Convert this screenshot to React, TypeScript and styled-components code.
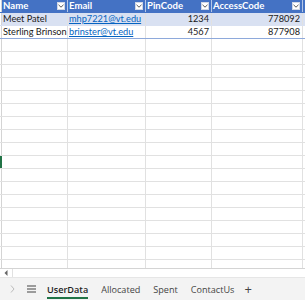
import React from "react";
import styled, { createGlobalStyle } from "styled-components";

const Global = createGlobalStyle`
  html, body { margin: 0; padding: 0; background: #fff; }
  body { width: 305px; height: 300px; overflow: hidden; }
  * { box-sizing: border-box; }
`;

const Sheet = styled.div`
  width: 305px;
  height: 300px;
  display: flex;
  flex-direction: column;
  font-family: Lato, "Liberation Sans", sans-serif;
`;

const GridArea = styled.div`
  height: 268px;
  overflow: hidden;
  display: flex;
  flex-direction: column;
`;

const Row = styled.div<{ $bg?: string; $bottom?: string }>`
  display: flex;
  height: 13px;
  flex: none;
  background: ${(p) => p.$bg || "#fff"};
  border-bottom: 1px solid ${(p) => p.$bottom || "#e1e1e1"};
`;

const RowHead = styled.div<{ $sel?: boolean }>`
  width: 2px;
  flex: none;
  background: ${(p) => (p.$sel ? "#217346" : "#fff")};
  border-right: 1px solid ${(p) => (p.$sel ? "#217346" : "#d4d4d4")};
`;

const Cell = styled.div<{ $w: number; $align?: string; $head?: boolean }>`
  width: ${(p) => p.$w}px;
  flex: none;
  height: 100%;
  display: flex;
  align-items: center;
  justify-content: ${(p) => (p.$align === "right" ? "flex-end" : "flex-start")};
  padding: 0 2px 0 1px;
  border-right: 1px solid ${(p) => (p.$head ? "#b4c6e7" : "#e1e1e1")};
  font-size: ${(p) => (p.$head ? "9.6px" : "9.2px")};
  line-height: 12px;
  white-space: nowrap;
  overflow: hidden;
  color: ${(p) => (p.$head ? "#fff" : "#1a1a1a")};
  font-weight: ${(p) => (p.$head ? 700 : 400)};
`;

const HeadLabel = styled.span`
  flex: 1;
`;

const Drop = styled.span`
  width: 8px;
  height: 8px;
  flex: none;
  background: #fff;
  border: 1px solid #d0d7e5;
  display: flex;
  align-items: center;
  justify-content: center;
`;

const Link = styled.span`
  color: #0563c1;
  text-decoration: underline;
`;

const Scroll = styled.div`
  height: 10px;
  flex: none;
  border-top: 1px solid #d4d4d4;
  border-bottom: 1px solid #e6e6e6;
  background: #fff;
  display: flex;
`;

const ScrollBtn = styled.div`
  width: 13px;
  border-right: 1px solid #e1e1e1;
  display: flex;
  align-items: center;
  justify-content: center;
`;

const TabBar = styled.div`
  flex: 1;
  background: #f3f3f3;
  display: flex;
  align-items: stretch;
  padding-left: 8px;
  font-family: "Open Sans", "Noto Sans", sans-serif;
  font-size: 9.1px;
`;

const NavIcon = styled.div<{ $w: number }>`
  width: ${(p) => p.$w}px;
  display: flex;
  align-items: center;
  justify-content: center;
`;

const Tab = styled.div<{ $active?: boolean }>`
  position: relative;
  display: flex;
  align-items: center;
  margin-right: 13px;
  color: ${(p) => (p.$active ? "#1f1f1f" : "#444")};
  font-weight: ${(p) => (p.$active ? 600 : 400)};
  &::after {
    content: "";
    display: ${(p) => (p.$active ? "block" : "none")};
    position: absolute;
    left: 0;
    right: 0;
    bottom: 1px;
    height: 2px;
    background: #217346;
  }
`;

const Plus = styled.div`
  display: flex;
  align-items: center;
  color: #444;
  font-size: 13px;
  margin-left: -3px;
`;

const widths = [66, 78, 66, 91, 10];

const Chevron = () => (
  <svg width="6" height="4" viewBox="0 0 6 4">
    <path d="M0.5 0.8 L3 3.2 L5.5 0.8" fill="none" stroke="#444" strokeWidth="0.9" />
  </svg>
);

const data = [
  { name: "Meet Patel", email: "mhp7221@vt.edu", pin: "1234", code: "778092" },
  { name: "Sterling Brinson", email: "brinster@vt.edu", pin: "4567", code: "877908" },
];

export default function App() {
  const empty = Array.from({ length: 18 }, (_, i) => i);
  return (
    <>
      <Global />
      <Sheet>
        <GridArea>
          <Row $bg="#4472c4" $bottom="#4472c4">
            <RowHead />
            {["Name", "Email", "PinCode", "AccessCode"].map((h, i) => (
              <Cell key={h} $w={widths[i]} $head>
                <HeadLabel>{h}</HeadLabel>
                <Drop>
                  <Chevron />
                </Drop>
              </Cell>
            ))}
            <Cell $w={widths[4]} />
          </Row>
          {data.map((d, r) => (
            <Row key={d.name} $bg={r === 0 ? "#d9e1f2" : "#fff"} $bottom={r === 0 ? "#d9e1f2" : "#8ea9db"}>
              <RowHead />
              <Cell $w={widths[0]}>{d.name}</Cell>
              <Cell $w={widths[1]}>
                <Link>{d.email}</Link>
              </Cell>
              <Cell $w={widths[2]} $align="right">{d.pin}</Cell>
              <Cell $w={widths[3]} $align="right">{d.code}</Cell>
              <Cell $w={widths[4]} />
            </Row>
          ))}
          {empty.map((i) => (
            <Row key={i}>
              <RowHead $sel={i === 9} />
              {widths.map((w, c) => (
                <Cell key={c} $w={w} />
              ))}
            </Row>
          ))}
        </GridArea>
        <Scroll>
          <ScrollBtn>
            <svg width="4" height="6" viewBox="0 0 4 6">
              <path d="M3.5 0 L0.5 3 L3.5 6 Z" fill="#666" />
            </svg>
          </ScrollBtn>
        </Scroll>
        <TabBar>
          <NavIcon $w={8}>
            <svg width="5" height="8" viewBox="0 0 5 8">
              <path d="M1 0.5 L4 4 L1 7.5" fill="none" stroke="#bbb" strokeWidth="1" />
            </svg>
          </NavIcon>
          <NavIcon $w={31}>
            <svg width="9" height="8" viewBox="0 0 9 8">
              <path d="M0 1 H9 M0 4 H9 M0 7 H9" stroke="#444" strokeWidth="1.1" />
            </svg>
          </NavIcon>
          <Tab $active>UserData</Tab>
          <Tab>Allocated</Tab>
          <Tab>Spent</Tab>
          <Tab>ContactUs</Tab>
          <Plus>+</Plus>
        </TabBar>
      </Sheet>
    </>
  );
}
